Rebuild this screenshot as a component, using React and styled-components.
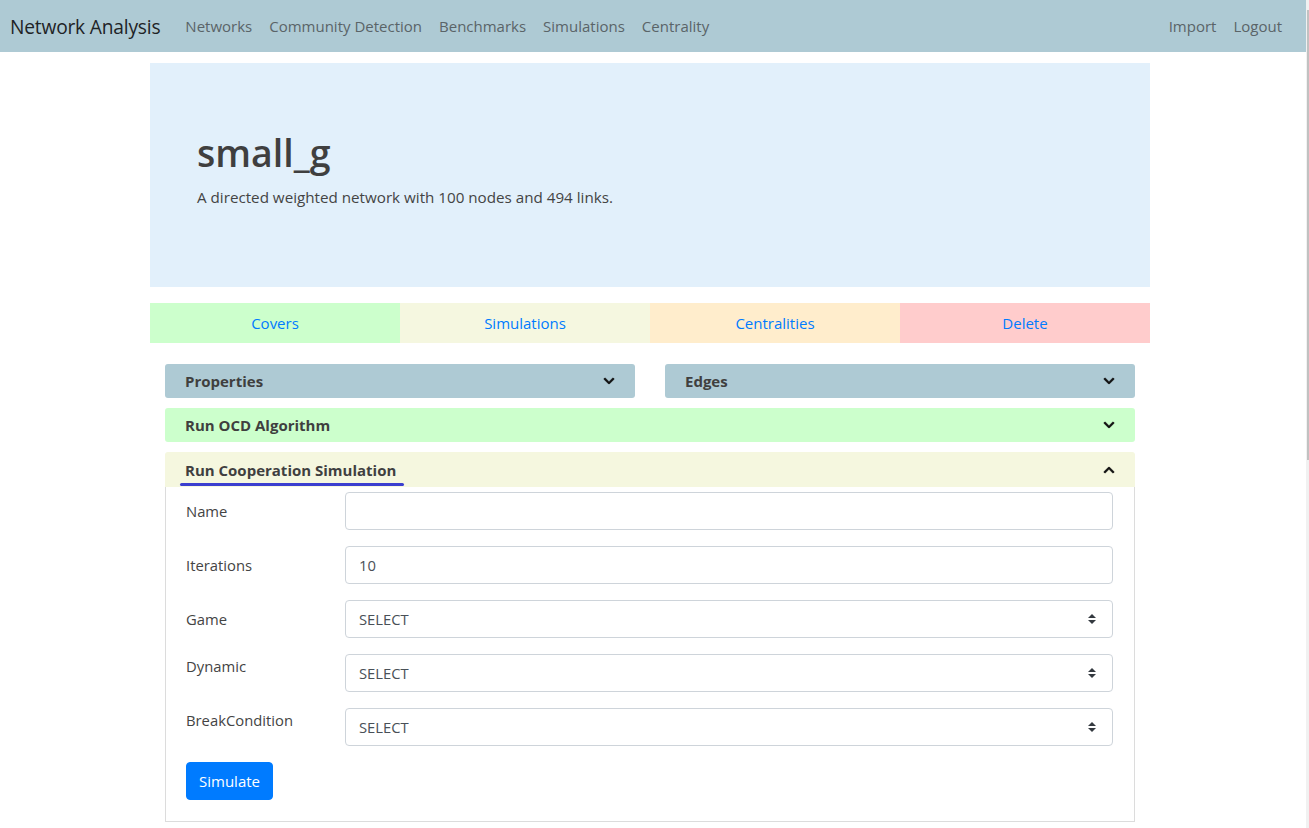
import React from 'react';
import styled, { createGlobalStyle } from 'styled-components';
import { FaChevronDown, FaChevronUp } from 'react-icons/fa';

const GlobalStyle = createGlobalStyle`
    html, body {
        margin: 0;
        padding: 0;
        background: #ffffff;
    }
    body {
        font-family: "Open Sans", "Noto Sans", "Liberation Sans", sans-serif;
        font-size: 15px;
        color: #444444;
        overflow: hidden;
    }
    * {
        box-sizing: border-box;
    }
`;

const StyledPage = styled.div`
    display: flex;
    flex-direction: row;
    width: 100%;
    height: 828px;
`;

const StyledMain = styled.div`
    flex: 1;
    display: flex;
    flex-direction: column;
`;

const StyledScrollTrack = styled.div`
    width: 3px;
    background: #f1f1f1;
    padding-top: 10px;
`;

const StyledScrollThumb = styled.div`
    width: 2px;
    height: 450px;
    margin-left: 1px;
    background: #c1c1c1;
`;

const StyledNavbar = styled.nav`
    height: 52px;
    background: #aecad4;
    display: flex;
    flex-direction: row;
    align-items: center;
    padding: 0 24px 0 10px;
`;

const StyledBrand = styled.div`
    font-size: 19.2px;
    color: #1e2326;
    margin-right: 25px;
    letter-spacing: -0.2px;
`;

const StyledNavList = styled.div`
    display: flex;
    flex-direction: row;
    align-items: center;
    flex: ${props => (props.grow ? 1 : 'none')};
    gap: 17px;
`;

const StyledNavLink = styled.span`
    font-size: 15px;
    color: #5a6468;
    cursor: pointer;
`;

const StyledContainer = styled.div`
    width: 1000px;
    margin-left: 150px;
    padding-top: 11px;
`;

const StyledJumbotron = styled.div`
    background: #e2f0fb;
    padding: 66px 47px 64px 47px;
    margin-bottom: 16px;
`;

const StyledTitle = styled.h1`
    margin: 0 0 8px 0;
    font-size: 37.5px;
    font-weight: 600;
    line-height: 48px;
    color: #3f3f3f;
`;

const StyledLead = styled.p`
    margin: 0 0 14px 0;
    font-size: 15.2px;
    line-height: 24px;
    color: #444444;
`;

const StyledTabs = styled.div`
    display: grid;
    grid-template-columns: repeat(4, 1fr);
    height: 40px;
    margin-bottom: 21px;
`;

const StyledTab = styled.div`
    background: ${props => props.color};
    color: #007bff;
    font-size: 15px;
    display: flex;
    align-items: center;
    justify-content: center;
    cursor: pointer;
`;

const StyledPanels = styled.div`
    padding: 0 15px;
    display: flex;
    flex-direction: column;
    gap: 10px;
`;

const StyledPanelRow = styled.div`
    display: grid;
    grid-template-columns: 1fr 1fr;
    gap: 30px;
`;

const StyledPanelHeader = styled.div`
    height: ${props => (props.open ? '35px' : '34px')};
    background: ${props => props.color};
    border-radius: ${props => (props.open ? '3px 3px 0 0' : '3px')};
    display: flex;
    flex-direction: row;
    align-items: center;
    justify-content: space-between;
    padding: 0 20px;
    font-weight: 700;
    font-size: 15px;
    color: #3f3f3f;
    cursor: pointer;

    svg {
        font-size: 12px;
        color: #111111;
        stroke: #111111;
        stroke-width: 20px;
    }
`;

const StyledMarked = styled.span`
    position: relative;

    &::after {
        content: '';
        position: absolute;
        left: -5px;
        right: -8px;
        bottom: -6px;
        height: 3px;
        border-radius: 2px;
        background: #3b3fcf;
    }
`;

const StyledPanel = styled.div`
    display: flex;
    flex-direction: column;
`;

const StyledPanelBody = styled.div`
    border: 1px solid #dcdcdc;
    border-top: none;
    padding: 5px 21px 21px 20px;
    display: flex;
    flex-direction: column;
    gap: 16px;
`;

const StyledFormRow = styled.div`
    display: grid;
    grid-template-columns: 159px 1fr;
    align-items: start;
`;

const StyledLabel = styled.label`
    font-size: 14.8px;
    line-height: 24px;
    color: #444444;
    padding-top: ${props => (props.plain ? '0' : '7px')};
`;

const StyledInput = styled.div`
    height: 38px;
    border: 1px solid #ced4da;
    border-radius: 4px;
    background: #ffffff;
    display: flex;
    flex-direction: row;
    align-items: center;
    justify-content: space-between;
    padding: 0 16px 0 13px;
    font-size: 14.8px;
    color: #495057;
`;

const StyledButton = styled.button`
    align-self: flex-start;
    height: 38px;
    padding: 0 12px;
    background: #007bff;
    border: 1px solid #007bff;
    border-radius: 4px;
    color: #ffffff;
    font-family: inherit;
    font-size: 15px;
    cursor: pointer;
`;

const SelectArrows = () => (
    <svg width="8" height="10" viewBox="0 0 4 5">
        <path fill="#343a40" d="M2 0L0 2h4zm0 5L0 3h4z" />
    </svg>
);

const FormRow = ({ label, plain, value, select }) => (
    <StyledFormRow>
        <StyledLabel plain={plain}>{label}</StyledLabel>
        <StyledInput>
            <span>{value}</span>
            {select && <SelectArrows />}
        </StyledInput>
    </StyledFormRow>
);

const navItems = ['Networks', 'Community Detection', 'Benchmarks', 'Simulations', 'Centrality'];

const tabs = [
    { label: 'Covers', color: '#ccffcc' },
    { label: 'Simulations', color: '#f5f7e0' },
    { label: 'Centralities', color: '#ffedcc' },
    { label: 'Delete', color: '#ffcccc' },
];

const App = () => (
    <StyledPage>
        <GlobalStyle />
        <StyledMain>
            <StyledNavbar>
                <StyledBrand>Network Analysis</StyledBrand>
                <StyledNavList grow>
                    {navItems.map(item => (
                        <StyledNavLink key={item}>{item}</StyledNavLink>
                    ))}
                </StyledNavList>
                <StyledNavList>
                    <StyledNavLink>Import</StyledNavLink>
                    <StyledNavLink>Logout</StyledNavLink>
                </StyledNavList>
            </StyledNavbar>

            <StyledContainer>
                <StyledJumbotron>
                    <StyledTitle>small_g</StyledTitle>
                    <StyledLead>A directed weighted network with 100 nodes and 494 links.</StyledLead>
                </StyledJumbotron>

                <StyledTabs>
                    {tabs.map(tab => (
                        <StyledTab key={tab.label} color={tab.color}>{tab.label}</StyledTab>
                    ))}
                </StyledTabs>

                <StyledPanels>
                    <StyledPanelRow>
                        <StyledPanelHeader color="#aecad4">
                            Properties <FaChevronDown />
                        </StyledPanelHeader>
                        <StyledPanelHeader color="#aecad4">
                            Edges <FaChevronDown />
                        </StyledPanelHeader>
                    </StyledPanelRow>

                    <StyledPanelHeader color="#ccffcc">
                        Run OCD Algorithm <FaChevronDown />
                    </StyledPanelHeader>

                    <StyledPanel>
                        <StyledPanelHeader color="#f5f7df" open>
                            <StyledMarked>Run Cooperation Simulation</StyledMarked>
                            <FaChevronUp />
                        </StyledPanelHeader>
                        <StyledPanelBody>
                            <FormRow label="Name" value="" />
                            <FormRow label="Iterations" value="10" />
                            <FormRow label="Game" value="SELECT" select />
                            <FormRow label="Dynamic" value="SELECT" select plain />
                            <FormRow label="BreakCondition" value="SELECT" select plain />
                            <StyledButton>Simulate</StyledButton>
                        </StyledPanelBody>
                    </StyledPanel>
                </StyledPanels>
            </StyledContainer>
        </StyledMain>
        <StyledScrollTrack>
            <StyledScrollThumb />
        </StyledScrollTrack>
    </StyledPage>
);

export default App;
